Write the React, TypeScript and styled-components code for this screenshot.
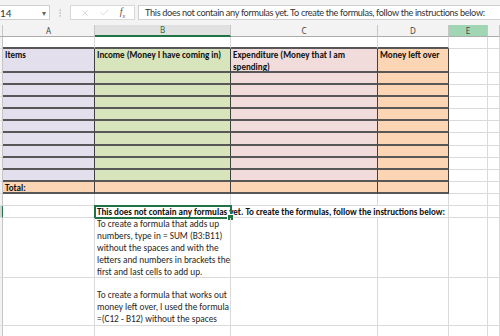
import React from 'react';
import styled, { createGlobalStyle } from 'styled-components';
import { X, Check, EllipsisVertical } from 'lucide-react';

const GlobalStyle = createGlobalStyle`
  html, body {
    margin: 0;
    padding: 0;
    background: #ffffff;
    overflow: hidden;
  }
  body {
    font-family: 'Carlito', 'Lato', sans-serif;
  }
`;

const LIGHT = '#dadada';
const DARK = '#404040';

const fills = {
  none: 'transparent',
  purple: '#e4dfec',
  green: '#d8e4bc',
  pink: '#f2dcdb',
  orange: '#fcd5b4',
};

type Fill = keyof typeof fills;

const columns = ['A', 'B', 'C', 'D', 'E', ''];
const tableFills: Fill[] = ['purple', 'green', 'pink', 'orange'];

const App = () => {
  return (
    <Page>
      <GlobalStyle />
      <FormulaBar>
        <NameBox>
          <span>14</span>
          <Caret>▾</Caret>
        </NameBox>
        <Grip>
          <EllipsisVertical size={10} strokeWidth={1.5} />
        </Grip>
        <ActionBox>
          <Action>
            <X size={10} strokeWidth={1.2} />
          </Action>
          <Action>
            <Check size={11} strokeWidth={1.2} />
          </Action>
          <Fx>
            f<sub>x</sub>
          </Fx>
        </ActionBox>
        <FormulaInput>
          This does not contain any formulas yet. To create the formulas, follow the instructions below:
        </FormulaInput>
      </FormulaBar>

      <Sheet>
        <Corner />
        {columns.map((c) => (
          <ColHead key={c || 'f'} $active={c === 'B'} $picked={c === 'E'}>
            {c}
          </ColHead>
        ))}

        {/* row 1 */}
        <RowHead />
        {tableFills.map((f, i) => (
          <Cell key={i} $topOfTable />
        ))}
        <Cell />
        <Cell />

        {/* row 2: headings */}
        <RowHead />
        <Cell $fill="purple" $dark $bold>Items</Cell>
        <Cell $fill="green" $dark $bold>Income (Money I have coming in)</Cell>
        <Cell $fill="pink" $dark $bold $wrap>Expenditure (Money that I am spending)</Cell>
        <Cell $fill="orange" $dark $bold>Money left over</Cell>
        <Cell />
        <Cell />

        {/* rows 3 - 11 */}
        {Array.from({ length: 9 }).map((_, r) => (
          <React.Fragment key={r}>
            <RowHead />
            {tableFills.map((f, i) => (
              <Cell key={i} $fill={f} $dark />
            ))}
            <Cell />
            <Cell />
          </React.Fragment>
        ))}

        {/* row 12: totals */}
        <RowHead />
        <Cell $fill="orange" $dark $bold>Total:</Cell>
        <Cell $fill="orange" $dark />
        <Cell $fill="orange" $dark />
        <Cell $fill="orange" $dark />
        <Cell />
        <Cell />

        {/* row 13 */}
        <RowHead />
        <Cell />
        <Cell />
        <Cell />
        <Cell />
        <Cell />
        <Cell />

        {/* row 14: active cell */}
        <RowHead $selected />
        <Cell />
        <Cell $span={3} $bold $overflow>
          This does not contain any formulas yet. To create the formulas, follow the instructions below:
          <Selection>
            <Handle />
          </Selection>
        </Cell>
        <Cell />
        <Cell />

        {/* row 15 */}
        <RowHead />
        <Cell />
        <Cell $note>
          <Line>To create a formula that adds up</Line>
          <Line>numbers, type in = SUM (B3:B11)</Line>
          <Line>without the spaces and with the</Line>
          <Line>letters and numbers in brackets the</Line>
          <Line>first and last cells to add up.</Line>
        </Cell>
        <Cell />
        <Cell />
        <Cell />
        <Cell />

        {/* row 16 */}
        <RowHead />
        <Cell />
        <Cell $note $bottom>
          <Line>To create a formula that works out</Line>
          <Line>money left over, I used the formula</Line>
          <Line>=(C12 - B12) without the spaces</Line>
        </Cell>
        <Cell />
        <Cell />
        <Cell />
        <Cell />

        {/* row 17 */}
        <RowHead />
        <Cell />
        <Cell />
        <Cell />
        <Cell />
        <Cell />
        <Cell />
      </Sheet>
    </Page>
  );
};

export default App;

const Page = styled.div`
  width: 500px;
  height: 336px;
  overflow: hidden;
  background: #ffffff;
`;

const FormulaBar = styled.div`
  height: 25px;
  display: flex;
  align-items: center;
  background: #f3f3f3;
  font-family: 'Lato', 'Noto Sans', sans-serif;
`;

const NameBox = styled.div`
  width: 50px;
  height: 15px;
  box-sizing: border-box;
  display: flex;
  align-items: center;
  justify-content: space-between;
  padding: 0 3px 0 0;
  background: #ffffff;
  border: 1px solid #d0d0d0;
  border-left: none;
  font-size: 10px;
  color: #333333;
`;

const Caret = styled.span`
  font-size: 8px;
  color: #666666;
`;

const Grip = styled.div`
  width: 20px;
  display: flex;
  justify-content: center;
  color: #b5b5b5;
`;

const ActionBox = styled.div`
  width: 65px;
  height: 15px;
  box-sizing: border-box;
  display: flex;
  align-items: center;
  justify-content: space-around;
  padding: 0 4px;
  background: #ffffff;
  border: 1px solid #d8d8d8;
`;

const Action = styled.span`
  display: flex;
  color: #bdbdbd;
`;

const Fx = styled.span`
  font-family: 'Liberation Serif', serif;
  font-style: italic;
  font-size: 10px;
  color: #555555;
  line-height: 1;

  sub {
    font-size: 6px;
  }
`;

const FormulaInput = styled.div`
  flex: 1;
  height: 15px;
  margin-left: 3px;
  box-sizing: border-box;
  display: flex;
  align-items: center;
  padding-left: 6px;
  background: #ffffff;
  border: 1px solid #d0d0d0;
  border-right: none;
  font-size: 9.2px;
  letter-spacing: -0.35px;
  color: #333333;
  white-space: nowrap;
  overflow: hidden;
`;

const Sheet = styled.div`
  display: grid;
  grid-template-columns: 3px 92px 136px 147px 71px 39px 12px;
  grid-template-rows: 12px 12px 24px repeat(9, 12.1px) 12px 12px 12px 60px 48px 12px;
  line-height: 12px;
`;

const Corner = styled.div`
  background: #f3f3f3;
  border-right: 1px solid #c6c6c6;
  border-bottom: 1px solid #ababab;
`;

const ColHead = styled.div<{ $active?: boolean; $picked?: boolean }>`
  box-sizing: border-box;
  display: flex;
  align-items: center;
  justify-content: center;
  font-family: 'Noto Sans', sans-serif;
  font-size: 8px;
  color: ${(p) => (p.$active ? '#1e6e40' : '#444444')};
  background: ${(p) => (p.$active ? '#e1e1e1' : p.$picked ? '#a0d6b4' : '#f3f3f3')};
  border-right: 1px solid #c6c6c6;
  border-bottom: ${(p) => (p.$active ? '2px solid #217346' : '1px solid #ababab')};
`;

const RowHead = styled.div<{ $selected?: boolean }>`
  background: ${(p) => (p.$selected ? '#d2d2d2' : '#f3f3f3')};
  border-right: 1px solid ${(p) => (p.$selected ? '#217346' : '#c6c6c6')};
  border-bottom: 1px solid #dedede;
`;

const Cell = styled.div<{
  $fill?: Fill;
  $dark?: boolean;
  $bold?: boolean;
  $wrap?: boolean;
  $span?: number;
  $overflow?: boolean;
  $note?: boolean;
  $bottom?: boolean;
  $topOfTable?: boolean;
}>`
  position: relative;
  box-sizing: border-box;
  min-width: 0;
  padding: 0 2px;
  grid-column: ${(p) => (p.$span ? `span ${p.$span}` : 'auto')};
  background: ${(p) => fills[p.$fill || 'none']};
  border-right: 1px solid ${(p) => (p.$dark ? DARK : LIGHT)};
  border-bottom: ${(p) => (p.$dark || p.$topOfTable ? `2px solid #575757` : `1px solid ${LIGHT}`)};
  font-size: ${(p) => (p.$bold ? '9px' : '9.3px')};
  font-weight: ${(p) => (p.$bold ? 700 : 400)};
  color: ${(p) => (p.$note ? '#262626' : '#111111')};
  white-space: ${(p) => (p.$wrap ? 'normal' : 'nowrap')};
  overflow: ${(p) => (p.$overflow || p.$note ? 'visible' : 'hidden')};
  display: flex;
  flex-direction: column;
  justify-content: ${(p) => (p.$bottom ? 'flex-end' : 'flex-start')};

  ${(p) => (p.$note ? `border-left: 1px solid ${LIGHT}; margin-left: -1px;` : '')}
`;

const Line = styled.span`
  display: block;
  white-space: nowrap;
`;

const Selection = styled.div`
  position: absolute;
  left: -1px;
  top: -1px;
  width: 138px;
  height: 14px;
  box-sizing: border-box;
  border: 2px solid #217346;
  pointer-events: none;
`;

const Handle = styled.div`
  position: absolute;
  right: -4px;
  bottom: -4px;
  width: 5px;
  height: 5px;
  background: #217346;
  border: 1px solid #ffffff;
`;
